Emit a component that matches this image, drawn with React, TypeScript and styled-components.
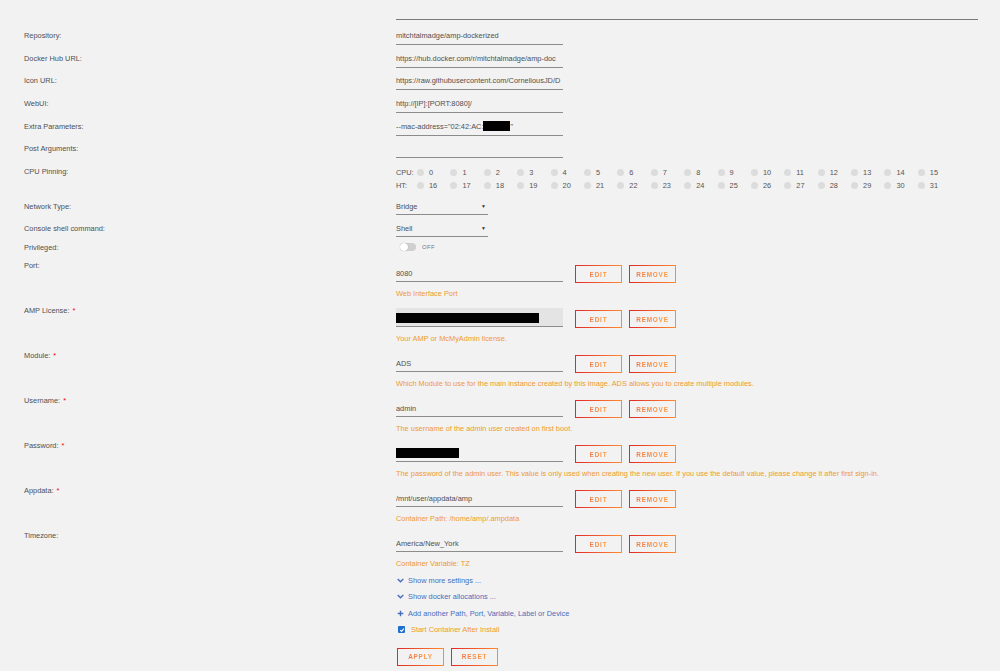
import React from 'react';
import styled, { createGlobalStyle } from 'styled-components';

const GlobalStyle = createGlobalStyle`
  html, body {
    margin: 0;
    padding: 0;
    background: #f2f2f2;
  }
  body {
    font-family: "Liberation Sans", Arial, sans-serif;
    font-size: 7.4px;
    color: #555;
  }
`;

const Page = styled.div`
  width: 1000px;
  min-height: 671px;
  padding: 0 0 0 24px;
  box-sizing: border-box;
  background: #f2f2f2;
`;

const Row = styled.div<{ $h: number }>`
  display: grid;
  grid-template-columns: 372px 1fr;
  height: ${({ $h }) => $h}px;
`;

const TopLine = styled.div`
  grid-column: 2;
  width: 582px;
  height: 19px;
  border-bottom: 1px solid #7a7a7a;
  margin-bottom: 5px;
`;

const Label = styled.div<{ $lh?: number }>`
  padding-top: 1px;
  line-height: ${({ $lh }) => $lh ?? 20}px;
  font-size: 7.4px;
  color: #505050;
  white-space: nowrap;
`;

const Required = styled.span`
  color: #f0000c;
  margin-left: 3px;
`;

const Input = styled.div<{ $filled?: boolean; $h?: number }>`
  width: 167px;
  height: ${({ $h }) => $h ?? 20}px;
  box-sizing: border-box;
  border-bottom: 1px solid #8c8c8c;
  background: ${({ $filled }) => ($filled ? '#e4e4e4' : 'transparent')};
  display: flex;
  align-items: center;
  padding-top: 2px;
  font-size: 7.4px;
  color: #505050;
  white-space: nowrap;
  overflow: hidden;
`;

const Redacted = styled.span<{ $w: number }>`
  display: inline-block;
  width: ${({ $w }) => $w}px;
  height: 10px;
  background: #000;
  flex-shrink: 0;
`;

const CpuBlock = styled.div`
  padding-top: 4.5px;
  display: flex;
  flex-direction: column;
`;

const CpuLine = styled.div`
  display: flex;
  align-items: center;
  height: 13px;
`;

const CpuTag = styled.span`
  width: 21px;
  font-size: 7.4px;
  color: #555;
`;

const CpuItem = styled.span`
  width: 33.4px;
  display: flex;
  align-items: center;
  font-size: 7.4px;
  color: #555;
`;

const Dot = styled.span`
  width: 7px;
  height: 7px;
  border-radius: 50%;
  background: #dcdcdc;
  margin-right: 5px;
  flex-shrink: 0;
`;

const Select = styled.div`
  width: 92px;
  height: 19px;
  box-sizing: border-box;
  border-bottom: 1px solid #8c8c8c;
  display: flex;
  align-items: center;
  justify-content: space-between;
  padding-top: 2px;
  font-size: 7.4px;
  color: #505050;
`;

const Caret = styled.span`
  font-size: 5px;
  color: #333;
  margin-right: 2px;
`;

const ToggleWrap = styled.div`
  display: flex;
  align-items: center;
  height: 17px;
  padding-left: 4px;
  gap: 6px;
`;

const Track = styled.span`
  position: relative;
  width: 16px;
  height: 8px;
  border-radius: 4px;
  background: #cfcfcf;
`;

const Knob = styled.span`
  position: absolute;
  left: 0;
  top: 0;
  width: 8px;
  height: 8px;
  border-radius: 50%;
  background: #fff;
  box-shadow: 0 0 1px rgba(0, 0, 0, 0.35);
`;

const OffText = styled.span`
  font-size: 6px;
  color: #777;
  letter-spacing: 0.3px;
`;

const FieldCol = styled.div`
  padding-top: 8px;
`;

const FieldLine = styled.div`
  display: flex;
  align-items: flex-start;
`;

const Buttons = styled.div`
  display: flex;
  gap: 7px;
  margin-left: 12px;
  margin-top: 2px;
`;

const Button = styled.button`
  width: 47px;
  height: 18px;
  box-sizing: border-box;
  padding: 0;
  background: transparent;
  border: 1px solid;
  border-image: linear-gradient(90deg, #e22828 0%, #ff8c2f 100%) 1;
  font-family: "Liberation Sans", Arial, sans-serif;
  font-weight: bold;
  font-size: 6.4px;
  letter-spacing: 0.8px;
  cursor: pointer;
`;

const ButtonText = styled.span`
  background: linear-gradient(90deg, #f07a45 0%, #ff9a3c 100%);
  -webkit-background-clip: text;
  background-clip: text;
  color: transparent;
`;

const Desc = styled.div`
  margin-top: 5px;
  line-height: 12px;
  font-size: 7.4px;
  color: #ef9a2e;
  white-space: nowrap;
`;

const Extras = styled.div`
  grid-column: 2;
  padding-top: 1.75px;
`;

const LinkLine = styled.div`
  display: flex;
  align-items: center;
  height: 16.5px;
  font-size: 7.4px;
  color: #486dba;
  gap: 4px;
  padding-left: 1px;
`;

const CheckLine = styled.div`
  display: flex;
  align-items: center;
  height: 16.5px;
  font-size: 7.4px;
  color: #ef9a2e;
  gap: 6px;
  padding-left: 2px;
`;

const CheckBox = styled.span`
  width: 7px;
  height: 7px;
  border-radius: 1px;
  background: #1f6fd1;
  display: flex;
  align-items: center;
  justify-content: center;
`;

const ActionRow = styled.div`
  display: flex;
  gap: 7px;
  margin-top: 10px;
  padding-left: 1px;
`;

const Chevron = () => (
  <svg width="7" height="5" viewBox="0 0 10 7">
    <path d="M1 1.2 L5 5.2 L9 1.2" fill="none" stroke="#486dba" strokeWidth="2" />
  </svg>
);

const Plus = () => (
  <svg width="7" height="7" viewBox="0 0 10 10">
    <path d="M5 1 V9 M1 5 H9" fill="none" stroke="#486dba" strokeWidth="2" />
  </svg>
);

const simpleRows: { label: string; value: React.ReactNode }[] = [
  { label: 'Repository:', value: 'mitchtalmadge/amp-dockerized' },
  { label: 'Docker Hub URL:', value: 'https://hub.docker.com/r/mitchtalmadge/amp-doc' },
  { label: 'Icon URL:', value: 'https://raw.githubusercontent.com/CorneliousJD/D' },
  { label: 'WebUI:', value: 'http://[IP]:[PORT:8080]/' },
  {
    label: 'Extra Parameters:',
    value: (
      <>
        --mac-address="02:42:AC:<Redacted $w={27} />"
      </>
    ),
  },
  { label: 'Post Arguments:', value: '' },
];

interface ConfigItem {
  label: string;
  required?: boolean;
  value: React.ReactNode;
  filled?: boolean;
  desc: string;
}

const configRows: ConfigItem[] = [
  { label: 'Port:', value: '8080', desc: 'Web Interface Port' },
  {
    label: 'AMP License:',
    required: true,
    filled: true,
    value: <Redacted $w={143} />,
    desc: 'Your AMP or McMyAdmin license.',
  },
  {
    label: 'Module:',
    required: true,
    value: 'ADS',
    desc: 'Which Module to use for the main instance created by this image. ADS allows you to create multiple modules.',
  },
  {
    label: 'Username:',
    required: true,
    value: 'admin',
    desc: 'The username of the admin user created on first boot.',
  },
  {
    label: 'Password:',
    required: true,
    value: <Redacted $w={63} />,
    desc: 'The password of the admin user. This value is only used when creating the new user. If you use the default value, please change it after first sign-in.',
  },
  {
    label: 'Appdata:',
    required: true,
    value: '/mnt/user/appdata/amp',
    desc: 'Container Path: /home/amp/.ampdata',
  },
  { label: 'Timezone:', value: 'America/New_York', desc: 'Container Variable: TZ' },
];

const cpuNums = Array.from({ length: 16 }, (_, i) => i);

export default function App() {
  return (
    <Page>
      <GlobalStyle />
      <Row $h={25}>
        <TopLine />
      </Row>

      {simpleRows.map((r) => (
        <Row $h={22.7} key={r.label}>
          <Label>{r.label}</Label>
          <Input>{r.value}</Input>
        </Row>
      ))}

      <Row $h={35}>
        <Label>CPU Pinning:</Label>
        <CpuBlock>
          <CpuLine>
            <CpuTag>CPU:</CpuTag>
            {cpuNums.map((n) => (
              <CpuItem key={n}>
                <Dot />
                {n}
              </CpuItem>
            ))}
          </CpuLine>
          <CpuLine>
            <CpuTag>HT:</CpuTag>
            {cpuNums.map((n) => (
              <CpuItem key={n}>
                <Dot />
                {n + 16}
              </CpuItem>
            ))}
          </CpuLine>
        </CpuBlock>
      </Row>

      <Row $h={22}>
        <Label>Network Type:</Label>
        <Select>
          Bridge<Caret>▼</Caret>
        </Select>
      </Row>
      <Row $h={20}>
        <Label>Console shell command:</Label>
        <Select>
          Shell<Caret>▼</Caret>
        </Select>
      </Row>
      <Row $h={17}>
        <Label $lh={17}>Privileged:</Label>
        <ToggleWrap>
          <Track>
            <Knob />
          </Track>
          <OffText>OFF</OffText>
        </ToggleWrap>
      </Row>

      {configRows.map((c) => (
        <Row $h={45} key={c.label}>
          <Label>
            {c.label}
            {c.required && <Required>*</Required>}
          </Label>
          <FieldCol>
            <FieldLine>
              <Input $h={19} $filled={c.filled}>
                {c.value}
              </Input>
              <Buttons>
                <Button>
                  <ButtonText>EDIT</ButtonText>
                </Button>
                <Button>
                  <ButtonText>REMOVE</ButtonText>
                </Button>
              </Buttons>
            </FieldLine>
            <Desc>{c.desc}</Desc>
          </FieldCol>
        </Row>
      ))}

      <Row $h={100}>
        <Extras>
          <LinkLine>
            <Chevron />
            Show more settings ...
          </LinkLine>
          <LinkLine>
            <Chevron />
            Show docker allocations ...
          </LinkLine>
          <LinkLine>
            <Plus />
            Add another Path, Port, Variable, Label or Device
          </LinkLine>
          <CheckLine>
            <CheckBox>
              <svg width="6" height="6" viewBox="0 0 10 10">
                <path d="M2 5.2 L4.2 7.4 L8.2 2.6" fill="none" stroke="#fff" strokeWidth="1.8" />
              </svg>
            </CheckBox>
            Start Container After Install
          </CheckLine>
          <ActionRow>
            <Button>
              <ButtonText>APPLY</ButtonText>
            </Button>
            <Button>
              <ButtonText>RESET</ButtonText>
            </Button>
          </ActionRow>
        </Extras>
      </Row>
    </Page>
  );
}
